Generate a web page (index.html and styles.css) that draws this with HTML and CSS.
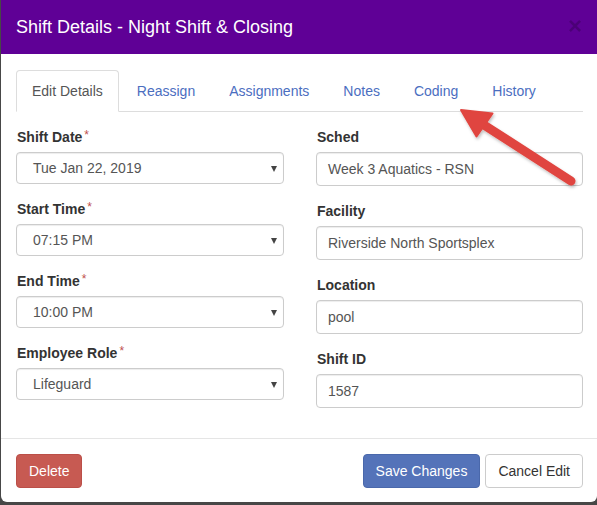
FILE: index.html
```html
<!DOCTYPE html>
<html>
<head>
<meta charset="utf-8">
<link rel="stylesheet" href="styles.css">
</head>
<body>
<div class="modal">
  <div class="modal-header">
    <h4 class="modal-title">Shift Details - Night Shift &amp; Closing</h4>
    <span class="close">&times;</span>
  </div>
  <div class="modal-body">
    <ul class="nav-tabs">
      <li class="tab active">Edit Details</li>
      <li class="tab">Reassign</li>
      <li class="tab">Assignments</li>
      <li class="tab">Notes</li>
      <li class="tab">Coding</li>
      <li class="tab">History</li>
    </ul>
    <div class="form-grid">
      <div class="col">
        <div class="group">
          <label class="label">Shift Date<span class="req">*</span></label>
          <div class="select"><span>Tue Jan 22, 2019</span><i class="caret"></i></div>
        </div>
        <div class="group">
          <label class="label">Start Time<span class="req">*</span></label>
          <div class="select"><span>07:15 PM</span><i class="caret"></i></div>
        </div>
        <div class="group">
          <label class="label">End Time<span class="req">*</span></label>
          <div class="select"><span>10:00 PM</span><i class="caret"></i></div>
        </div>
        <div class="group">
          <label class="label">Employee Role<span class="req">*</span></label>
          <div class="select"><span>Lifeguard</span><i class="caret"></i></div>
        </div>
      </div>
      <div class="col">
        <div class="group">
          <label class="label">Sched</label>
          <div class="input">Week 3 Aquatics - RSN</div>
        </div>
        <div class="group">
          <label class="label">Facility</label>
          <div class="input">Riverside North Sportsplex</div>
        </div>
        <div class="group">
          <label class="label">Location</label>
          <div class="input">pool</div>
        </div>
        <div class="group">
          <label class="label">Shift ID</label>
          <div class="input">1587</div>
        </div>
      </div>
    </div>
  </div>
  <div class="modal-footer">
    <button class="btn btn-danger">Delete</button>
    <div class="footer-right">
      <button class="btn btn-primary">Save Changes</button>
      <button class="btn btn-default">Cancel Edit</button>
    </div>
  </div>
</div>
<svg class="arrow" width="597" height="505" viewBox="0 0 597 505">
  <defs>
    <filter id="sh" x="-20%" y="-20%" width="140%" height="140%">
      <feDropShadow dx="1" dy="2" stdDeviation="1.5" flood-color="#000" flood-opacity="0.25"/>
    </filter>
  </defs>
  <g filter="url(#sh)" fill="#e0453f" stroke="#e0453f">
    <line x1="484" y1="125" x2="571" y2="181" stroke-width="9" stroke-linecap="round"/>
    <polygon points="461,110 492.5,113.5 476.5,136.5" stroke-width="2" stroke-linejoin="round"/>
  </g>
</svg>
</body>
</html>
```
FILE: styles.css
```css
* { box-sizing: border-box; }
html, body { margin: 0; padding: 0; }
body {
  width: 597px;
  height: 505px;
  background: #474747;
  font-family: "Liberation Sans", Arial, sans-serif;
  font-size: 14px;
  color: #333;
  position: relative;
  overflow: hidden;
}
.modal {
  margin-left: 1px;
  width: 596px;
  background: #fff;
  border-radius: 0 0 6px 6px;
  overflow: hidden;
}
.modal-header {
  height: 54px;
  background: #5f0096;
  display: flex;
  align-items: center;
  justify-content: space-between;
  padding: 0 15px 0 15px;
}
.modal-title {
  margin: 0;
  color: #fff;
  font-size: 18px;
  font-weight: normal;
  line-height: 20px;
}
.close {
  color: #000;
  opacity: 0.2;
  font-size: 24px;
  font-weight: bold;
  line-height: 1;
  margin-top: -2px;
}
.modal-body {
  padding: 16px 14px 15px 15px;
}
.nav-tabs {
  list-style: none;
  margin: 0;
  padding: 0;
  display: flex;
  border-bottom: 1px solid #ddd;
}
.tab {
  padding: 10px 15px;
  line-height: 20px;
  margin-right: 2px;
  margin-bottom: -1px;
  border: 1px solid transparent;
  border-radius: 4px 4px 0 0;
  color: #4b6ebf;
}
.tab.active {
  color: #555;
  background: #fff;
  border-color: #ddd #ddd transparent #ddd;
}
.form-grid {
  display: grid;
  grid-template-columns: 268px 267px;
  column-gap: 32px;
  padding-top: 15px;
}
.group {
  margin-bottom: 15px;
}
.label {
  display: block;
  font-weight: bold;
  line-height: 20px;
  height: 20px;
  margin-bottom: 5px;
  padding-left: 1px;
}
.req {
  color: #c0504d;
  font-weight: normal;
  font-size: 12px;
  line-height: 0;
  margin-left: 2px;
  vertical-align: 3px;
}
.select {
  height: 32px;
  border: 1px solid #ccc;
  border-radius: 4px;
  box-shadow: inset 0 1px 1px rgba(0,0,0,0.075);
  display: flex;
  align-items: center;
  justify-content: space-between;
  padding: 0 6px 0 16px;
  color: #555;
}
.caret {
  width: 0;
  height: 0;
  border-left: 3.5px solid transparent;
  border-right: 3.5px solid transparent;
  border-top: 6px solid #444;
  margin-top: 1px;
}
.input {
  height: 34px;
  border: 1px solid #ccc;
  border-radius: 4px;
  box-shadow: inset 0 1px 1px rgba(0,0,0,0.075);
  display: flex;
  align-items: center;
  padding: 0 11px 0 11px;
  color: #555;
}
.modal-footer {
  border-top: 1px solid #e5e5e5;
  padding: 15px 14px 14px 15px;
  display: flex;
  justify-content: space-between;
}
.footer-right {
  display: flex;
  gap: 5px;
}
.btn {
  font-family: "Liberation Sans", Arial, sans-serif;
  font-size: 14px;
  line-height: 20px;
  padding: 6px 12px;
  border: 1px solid transparent;
  border-radius: 4px;
  margin: 0;
}
.btn-danger {
  background: #c75a52;
  border-color: #bb4f48;
  color: #fff;
}
.btn-primary {
  background: #5473b9;
  border-color: #4a68ab;
  color: #fff;
}
.btn-default {
  background: #fff;
  border-color: #ccc;
  color: #333;
}
.arrow {
  position: absolute;
  left: 0;
  top: 0;
  pointer-events: none;
}
```
